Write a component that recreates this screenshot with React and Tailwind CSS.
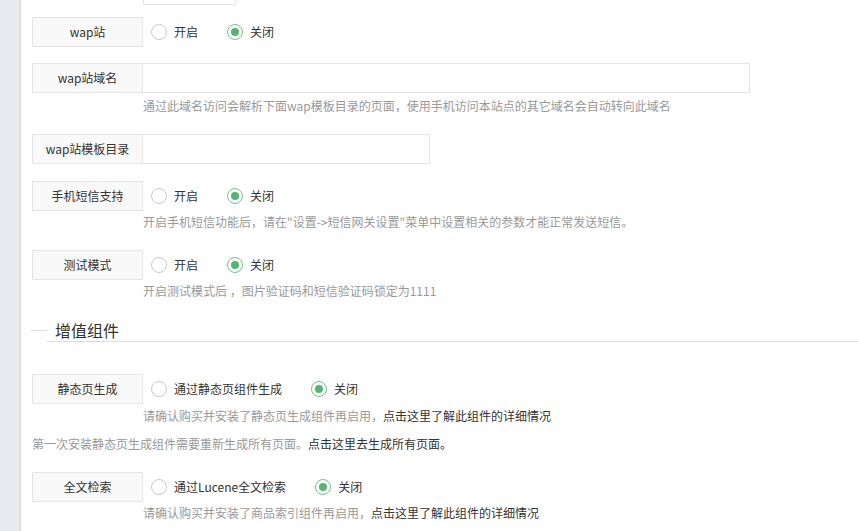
import React from 'react';

const font = { fontFamily: '"Microsoft YaHei", "Noto Sans CJK SC", "Noto Sans", sans-serif' };

function Radio({ checked, label }) {
  return (
    <label className="flex items-center mr-[29px] text-[12px] text-[#333]">
      <span
        className={`w-[16px] h-[16px] rounded-full border flex items-center justify-center bg-white ${
          checked ? 'border-[#6cc488]' : 'border-[#c9c9c9]'
        }`}
      >
        {checked && <span className="w-[8px] h-[8px] rounded-full bg-[#55b673]" />}
      </span>
      <span className="ml-[7px]">{label}</span>
    </label>
  );
}

function Label({ children }) {
  return (
    <div className="w-[111px] h-[30px] shrink-0 border border-[#e5e5e5] bg-[#f9f9f9] flex items-center justify-center text-[12px] text-[#333]">
      {children}
    </div>
  );
}

function RadioRow({ label, options, className = '' }) {
  return (
    <div className={`flex items-center ${className}`}>
      <Label>{label}</Label>
      <div className="flex items-center ml-[8px]">
        {options.map((o) => (
          <Radio key={o.label} {...o} />
        ))}
      </div>
    </div>
  );
}

function InputRow({ label, width, className = '' }) {
  return (
    <div className={`flex items-center ${className}`}>
      <Label>{label}</Label>
      <div className={`h-[30px] border border-l-0 border-[#e5e5e5] bg-white ${width}`} />
    </div>
  );
}

function Help({ children, className = '' }) {
  return (
    <div className={`pl-[111px] text-[12px] leading-[20px] text-[#999] ${className}`}>{children}</div>
  );
}

const onOff = [
  { label: '开启', checked: false },
  { label: '关闭', checked: true },
];

export default function App() {
  return (
    <div className="flex w-[858px] h-[531px] overflow-hidden bg-white" style={font}>
      <div className="w-[21px] shrink-0 bg-[#e9eaef] border-r-2 border-[#dcdde2]" />
      <div className="flex-1 flex flex-col pl-[11px]">
        <div className="ml-[111px] w-[93px] h-[5px] border border-t-0 border-[#e5e5e5]" />

        <RadioRow label="wap站" options={onOff} className="mt-[12px]" />

        <InputRow label="wap站域名" width="w-[607px]" className="mt-[16px]" />
        <Help className="mt-[3px]">
          通过此域名访问会解析下面wap模板目录的页面，使用手机访问本站点的其它域名会自动转向此域名
        </Help>

        <InputRow label="wap站模板目录" width="w-[287px]" className="mt-[18px]" />

        <RadioRow label="手机短信支持" options={onOff} className="mt-[17px]" />
        <Help className="mt-[1px]">
          开启手机短信功能后，请在"设置-&gt;短信网关设置"菜单中设置相关的参数才能正常发送短信。
        </Help>

        <RadioRow label="测试模式" options={onOff} className="mt-[18px]" />
        <Help className="mt-[1px]">开启测试模式后 ，图片验证码和短信验证码锁定为1111</Help>

        <div className="flex mt-[19px] -ml-[1px]">
          <div className="w-[16px] h-[11px] border-b border-[#dedede] shrink-0" />
          <div className="flex-1 border-b border-[#dedede] pl-[8px] text-[16px] leading-[20px] text-[#333] pb-[1px]">
            增值组件
          </div>
        </div>

        <RadioRow
          label="静态页生成"
          options={[
            { label: '通过静态页组件生成', checked: false },
            { label: '关闭', checked: true },
          ]}
          className="mt-[32px]"
        />
        <Help className="mt-[2px]">
          请确认购买并安装了静态页生成组件再启用，<span className="text-[#333]">点击这里了解此组件的详细情况</span>
        </Help>
        <div className="text-[12px] leading-[20px] text-[#999] mt-[8px]">
          第一次安装静态页生成组件需要重新生成所有页面。<span className="text-[#333]">点击这里去生成所有页面。</span>
        </div>

        <RadioRow
          label="全文检索"
          options={[
            { label: '通过Lucene全文检索', checked: false },
            { label: '关闭', checked: true },
          ]}
          className="mt-[18px]"
        />
        <Help className="mt-[1px]">
          请确认购买并安装了商品索引组件再启用，<span className="text-[#333]">点击这里了解此组件的详细情况</span>
        </Help>
      </div>
    </div>
  );
}
